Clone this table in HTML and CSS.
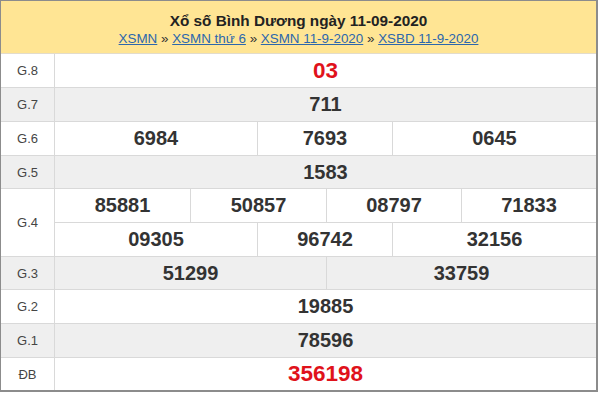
FILE: index.html
```html
<!DOCTYPE html>
<html lang="vi">
<head>
<meta charset="utf-8">
<title>Xổ số Bình Dương ngày 11-09-2020</title>
<link rel="stylesheet" href="styles.css">
</head>
<body>
<div class="frame">
  <div class="head">
    <div class="title">Xổ số Bình Dương ngày 11-09-2020</div>
    <div class="crumbs"><a href="#">XSMN</a> » <a href="#">XSMN thứ 6</a> » <a href="#">XSMN 11-9-2020</a> » <a href="#">XSBD 11-9-2020</a></div>
  </div>

  <div class="row h34">
    <div class="label">G.8</div>
    <div class="cells c1"><div class="cell red">03</div></div>
  </div>
  <div class="row h34 alt">
    <div class="label">G.7</div>
    <div class="cells c1"><div class="cell">711</div></div>
  </div>
  <div class="row h34">
    <div class="label">G.6</div>
    <div class="cells c3"><div class="cell">6984</div><div class="cell">7693</div><div class="cell">0645</div></div>
  </div>
  <div class="row h33 alt">
    <div class="label">G.5</div>
    <div class="cells c1"><div class="cell">1583</div></div>
  </div>
  <div class="row h68">
    <div class="label">G.4</div>
    <div class="stack">
      <div class="cells c4 sub"><div class="cell">85881</div><div class="cell">50857</div><div class="cell">08797</div><div class="cell">71833</div></div>
      <div class="cells c3 sub last"><div class="cell">09305</div><div class="cell">96742</div><div class="cell">32156</div></div>
    </div>
  </div>
  <div class="row h33 alt">
    <div class="label">G.3</div>
    <div class="cells c2"><div class="cell">51299</div><div class="cell">33759</div></div>
  </div>
  <div class="row h34">
    <div class="label">G.2</div>
    <div class="cells c1"><div class="cell">19885</div></div>
  </div>
  <div class="row h34 alt">
    <div class="label">G.1</div>
    <div class="cells c1"><div class="cell">78596</div></div>
  </div>
  <div class="row h32 end">
    <div class="label">ĐB</div>
    <div class="cells c1"><div class="cell red">356198</div></div>
  </div>
</div>
</body>
</html>
```
FILE: styles.css
```css
* { box-sizing: border-box; }
html, body { margin: 0; padding: 0; background: #fff; }
body { font-family: "Liberation Sans", Arial, sans-serif; color: #333; }

.frame {
  width: 598px;
  height: 392px;
  border-left: 1px solid #8c8c8c;
  border-top: 1px solid #8c8c8c;
  border-right: 2px solid #8c8c8c;
  border-bottom: 2px solid #8c8c8c;
  overflow: hidden;
}

.head {
  height: 53px;
  background: #ffe594;
  border-bottom: 1px solid #e3dccb;
  display: flex;
  flex-direction: column;
  align-items: center;
  padding-top: 11px;
}
.title {
  font-weight: bold;
  font-size: 15.3px;
  line-height: 18px;
  color: #222;
}
.crumbs {
  font-size: 13.4px;
  line-height: 17px;
  color: #333;
}
.crumbs a { color: #2c67ad; text-decoration: underline; }

.row {
  display: grid;
  grid-template-columns: 54px 541px;
  border-bottom: 1px solid #d9d9d9;
  background: #fff;
}
.row.alt { background: #efefef; }
.row.end { border-bottom: none; }
.h68 { height: 68px; }
.h34 { height: 34px; }
.h33 { height: 33px; }
.h32 { height: 32px; }

.label {
  border-right: 1px solid #d9d9d9;
  display: flex;
  align-items: center;
  justify-content: center;
  font-size: 13px;
  color: #454545;
}

.cells { display: grid; height: 100%; }
.stack { display: flex; flex-direction: column; }
.cells.sub { height: 34px; flex: none; border-bottom: 1px solid #d9d9d9; }
.cells.sub.last { height: 33px; border-bottom: none; }

.c1 { grid-template-columns: 541px; }
.c2 { grid-template-columns: 271px 270px; }
.c3 { grid-template-columns: 202px 135px 204px; }
.c4 { grid-template-columns: 135px 136px 135px 135px; }

.cell {
  display: flex;
  align-items: center;
  justify-content: center;
  font-weight: bold;
  font-size: 20px;
  color: #333;
}
.cell + .cell { border-left: 1px solid #d9d9d9; }
.cell.red { color: #e0121b; font-size: 22.5px; }
```
